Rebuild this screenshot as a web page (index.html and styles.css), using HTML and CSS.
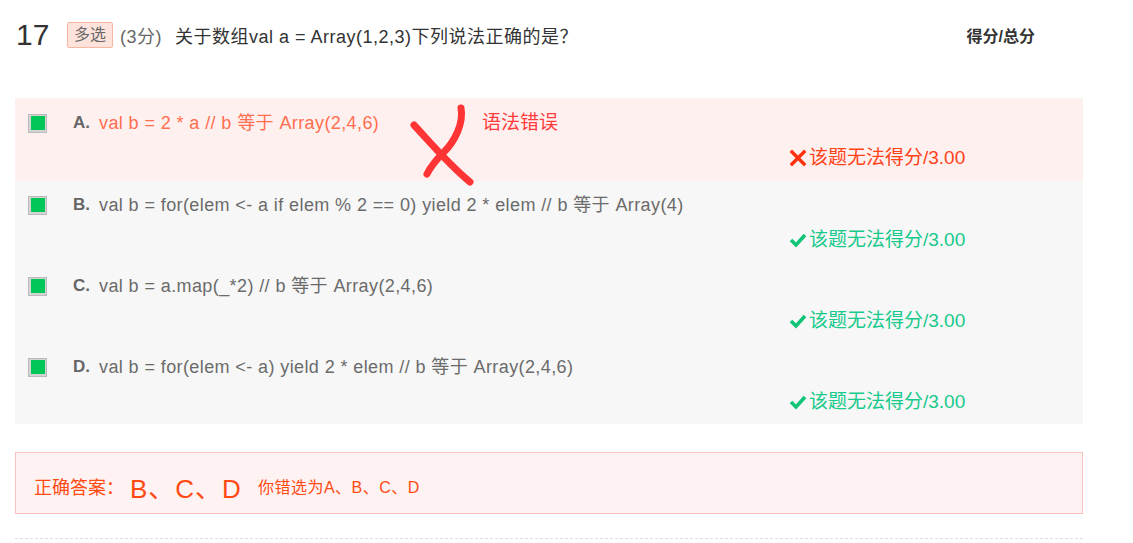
FILE: index.html
```html
<!DOCTYPE html>
<html lang="zh">
<head>
<meta charset="utf-8">
<link rel="stylesheet" href="styles.css">
</head>
<body>
<div class="question">
  <div class="q-head">
    <span class="q-num">17</span>
    <span class="q-type">多选</span>
    <span class="q-score">(3分)</span>
    <span class="q-title">关于数组val a = Array(1,2,3)下列说法正确的是？</span>
    <span class="q-total">得分/总分</span>
  </div>

  <div class="options">
    <div class="option wrong">
      <div class="opt-line">
        <span class="checkbox"><span class="fill"></span></span>
        <span class="letter">A.</span>
        <span class="opt-text">val b = 2 * a // b 等于 Array(2,4,6)</span>
      </div>
      <div class="opt-result bad">
        <svg class="mark" width="18" height="18" viewBox="0 0 18 18"><path d="M3 3 L15 15 M15 3 L3 15" stroke="#ff3210" stroke-width="3.4" stroke-linecap="square"/></svg>该题无法得分/3.00
      </div>
      <svg class="scribble" width="80" height="90" viewBox="0 0 80 90">
        <path d="M6 23 C 20 38, 40 62, 62 80" fill="none" stroke="#ff3434" stroke-width="7" stroke-linecap="round"/>
        <path d="M53 6 C 56 22, 46 40, 36 50 C 28 58, 22 66, 19 72" fill="none" stroke="#ff3434" stroke-width="7" stroke-linecap="round"/>
      </svg>
      <span class="note">语法错误</span>
    </div>
    <div class="option">
      <div class="opt-line">
        <span class="checkbox"><span class="fill"></span></span>
        <span class="letter">B.</span>
        <span class="opt-text">val b = for(elem &lt;- a if elem % 2 == 0) yield 2 * elem // b 等于 Array(4)</span>
      </div>
      <div class="opt-result good">
        <svg class="mark" width="18" height="18" viewBox="0 0 18 18"><path d="M2 9 L7 14 L16 4" fill="none" stroke="#10c577" stroke-width="3.6"/></svg>该题无法得分/3.00
      </div>
    </div>
    <div class="option">
      <div class="opt-line">
        <span class="checkbox"><span class="fill"></span></span>
        <span class="letter">C.</span>
        <span class="opt-text">val b = a.map(_*2) // b 等于 Array(2,4,6)</span>
      </div>
      <div class="opt-result good">
        <svg class="mark" width="18" height="18" viewBox="0 0 18 18"><path d="M2 9 L7 14 L16 4" fill="none" stroke="#10c577" stroke-width="3.6"/></svg>该题无法得分/3.00
      </div>
    </div>
    <div class="option">
      <div class="opt-line">
        <span class="checkbox"><span class="fill"></span></span>
        <span class="letter">D.</span>
        <span class="opt-text">val b = for(elem &lt;- a) yield 2 * elem // b 等于 Array(2,4,6)</span>
      </div>
      <div class="opt-result good">
        <svg class="mark" width="18" height="18" viewBox="0 0 18 18"><path d="M2 9 L7 14 L16 4" fill="none" stroke="#10c577" stroke-width="3.6"/></svg>该题无法得分/3.00
      </div>
    </div>
  </div>

  <div class="answer">
    <span class="ans-label">正确答案：</span>
    <span class="ans-value">B、C、D</span>
    <span class="ans-mine">你错选为A、B、C、D</span>
  </div>
  <div class="divider"></div>
</div>
</body>
</html>
```

FILE: styles.css
```css
* { box-sizing: border-box; }
body {
  margin: 0;
  background: #fff;
  font-family: "Liberation Sans", "Noto Sans CJK SC", sans-serif;
  color: #333;
}
.question {
  width: 1083px;
  padding-left: 15px;
}
.q-head {
  display: flex;
  align-items: center;
  height: 70px;
  padding-left: 1px;
}
.q-num {
  font-size: 30px;
  color: #333;
  width: 51px;
}
.q-type {
  display: inline-block;
  height: 26px;
  line-height: 24px;
  padding: 0 6px;
  border: 1px solid #f7b7a3;
  border-radius: 2px;
  background: #fde3dc;
  color: #666;
  font-size: 16px;
}
.q-score {
  margin-left: 7px;
  font-size: 18px;
  letter-spacing: 0.5px;
  color: #666;
}
.q-title {
  margin-left: 13px;
  font-size: 18px;
  letter-spacing: 0.5px;
  color: #333;
}
.q-total {
  margin-left: auto;
  margin-right: 48px;
  font-size: 16px;
  font-weight: bold;
  color: #333;
}
.options {
  margin-top: 28px;
  background: #f7f7f7;
}
.option {
  position: relative;
  height: 81px;
  padding-top: 14px;
}
.option.wrong {
  height: 83px;
  padding-top: 15px;
  background: #fff0f0;
}
.opt-line {
  display: flex;
  align-items: center;
  height: 20px;
  padding-left: 13px;
}
.checkbox {
  display: inline-flex;
  align-items: center;
  justify-content: center;
  width: 19px;
  height: 19px;
  background: #d4d4d4;
  border: 1px solid #bbb;
}
.checkbox .fill {
  width: 14px;
  height: 14px;
  background: #00c758;
}
.letter {
  margin-left: 26px;
  width: 26px;
  font-size: 17px;
  line-height: 20px;
  font-weight: bold;
  color: #666;
}
.opt-text {
  font-size: 18px;
  line-height: 20px;
  letter-spacing: 0.4px;
  color: #6b6b6b;
}
.wrong .opt-text { color: #ff6e4f; }
.opt-result {
  display: flex;
  align-items: center;
  margin-top: 12px;
  padding-left: 774px;
  font-size: 19px;
  line-height: 26px;
}
.opt-result .mark {
  margin-right: 2px;
}
.opt-result.bad { color: #ff4218; }
.opt-result.good { color: #17c98b; }
.scribble {
  position: absolute;
  left: 393px;
  top: 4px;
}
.note {
  position: absolute;
  left: 467px;
  top: 9px;
  font-size: 19px;
  color: #ff3b3b;
}
.answer {
  margin-top: 28px;
  height: 62px;
  display: flex;
  align-items: center;
  padding-left: 18px;
  padding-top: 6px;
  border: 1px solid #f9c2c0;
  background: #fff2f2;
  color: #ff4b12;
}
.ans-label { font-size: 18px; }
.ans-value {
  font-size: 26px;
  margin-left: 6px;
  letter-spacing: 1px;
}
.ans-mine {
  margin-left: 16px;
  font-size: 16px;
  letter-spacing: 0.5px;
  color: #ff4b12;
}
.divider {
  margin-top: 24px;
  border-top: 1px dashed #ddd;
}
```
